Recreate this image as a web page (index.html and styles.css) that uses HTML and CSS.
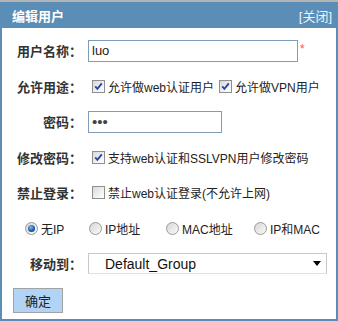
FILE: index.html
```html
<!DOCTYPE html>
<html lang="zh-CN">
<head>
    <meta charset="UTF-8">
    <title>编辑用户</title>
    <link rel="stylesheet" href="styles.css">
</head>
<body>
    <div class="dialog">
        <div class="dialog-head">
            <span class="title">编辑用户</span>
            <a class="close" href="#">[关闭]</a>
        </div>

        <form class="dialog-body">
            <div class="row">
                <label class="row-label">用户名称：</label>
                <div class="field">
                    <input class="text name" type="text" value="luo">
                    <span class="req">*</span>
                </div>
            </div>

            <div class="row">
                <label class="row-label">允许用途：</label>
                <div class="field checks">
                    <label class="check"><span class="cb on"><svg viewBox="0 0 11 11"><path d="M2.2 5.4 L4.4 7.8 L8.8 2.4"/></svg></span>允许做web认证用户</label>
                    <label class="check"><span class="cb on"><svg viewBox="0 0 11 11"><path d="M2.2 5.4 L4.4 7.8 L8.8 2.4"/></svg></span>允许做VPN用户</label>
                </div>
            </div>

            <div class="row">
                <label class="row-label">密码：</label>
                <div class="field">
                    <input class="text pass" type="password" value="abc">
                </div>
            </div>

            <div class="row">
                <label class="row-label">修改密码：</label>
                <div class="field checks">
                    <label class="check"><span class="cb on"><svg viewBox="0 0 11 11"><path d="M2.2 5.4 L4.4 7.8 L8.8 2.4"/></svg></span>支持web认证和SSLVPN用户修改密码</label>
                </div>
            </div>

            <div class="row">
                <label class="row-label">禁止登录：</label>
                <div class="field checks">
                    <label class="check"><span class="cb"></span>禁止web认证登录(不允许上网)</label>
                </div>
            </div>

            <div class="row radios">
                <label class="radio"><span class="rb on"></span>无IP</label>
                <label class="radio"><span class="rb"></span>IP地址</label>
                <label class="radio"><span class="rb"></span>MAC地址</label>
                <label class="radio"><span class="rb"></span>IP和MAC</label>
            </div>

            <div class="row">
                <label class="row-label">移动到：</label>
                <div class="field">
                    <div class="select-wrap">
                        <select class="group">
                            <option>Default_Group</option>
                        </select>
                    </div>
                </div>
            </div>

            <div class="actions">
                <button type="button" class="btn-ok">确定</button>
            </div>
        </form>
    </div>
</body>
</html>
```

FILE: styles.css
```css
* {
    margin: 0;
    padding: 0;
    box-sizing: border-box;
}

body {
    font-family: "Liberation Sans", Arial, "Noto Sans CJK SC", sans-serif;
    font-size: 12px;
    color: #222;
    background: #b4b4b4;
    padding-top: 2px;
}

.dialog {
    background: #fff;
    border: 2px solid #5b8eb7;
    border-top: none;
    height: 319px;
}

.dialog-head {
    display: flex;
    align-items: center;
    justify-content: space-between;
    height: 26px;
    background: #5b8eb7;
    color: #fff;
    margin: 0 -2px;
    padding-left: 12px;
    padding-right: 6px;
}

.title {
    font-size: 13px;
    font-weight: bold;
}

.close {
    font-size: 13px;
    color: #eef3f8;
    text-decoration: none;
}

.dialog-body {
    padding-top: 5px;
}

.row {
    display: grid;
    grid-template-columns: 80px 1fr;
    column-gap: 6px;
    align-items: center;
    height: 35.5px;
}

.row-label {
    text-align: right;
    font-size: 13px;
    font-weight: bold;
    color: #333;
    white-space: nowrap;
}

.field {
    display: flex;
    align-items: center;
}

.text {
    height: 22px;
    border: 1px solid #7f9db9;
    padding: 0 3px;
    font-family: "Liberation Sans", Arial, sans-serif;
    font-size: 13px;
    color: #222;
    outline: none;
}

.name {
    width: 210px;
}

.pass {
    width: 134px;
    font-size: 15px;
    letter-spacing: 0;
    color: #444;
}

.req {
    color: #ff5a1f;
    font-size: 12px;
    margin: -4px 0 0 2px;
}

.checks {
    gap: 5px;
    padding-left: 4px;
}

.check {
    display: flex;
    align-items: center;
    gap: 3px;
    white-space: nowrap;
}

.cb {
    display: inline-block;
    width: 13px;
    height: 13px;
    border: 1px solid #8e8f8f;
    background: linear-gradient(135deg, #d8d8d8, #f6f6f6 70%, #fff);
}

.cb svg {
    display: block;
    width: 11px;
    height: 11px;
}

.cb svg path {
    fill: none;
    stroke: #2a46a0;
    stroke-width: 1.9;
}

.radios {
    grid-template-columns: 64px 77px 88px auto;
    column-gap: 0;
    padding-left: 23px;
}

.radio {
    display: flex;
    align-items: center;
    gap: 3px;
    white-space: nowrap;
}

.rb {
    position: relative;
    width: 13px;
    height: 13px;
    border: 1px solid #9a9a9a;
    border-radius: 50%;
    background: linear-gradient(135deg, #d6d6d6, #fafafa);
}

.rb.on::after {
    content: "";
    position: absolute;
    left: 2px;
    top: 2px;
    width: 7px;
    height: 7px;
    border-radius: 50%;
    background: radial-gradient(circle at 40% 35%, #7fb9ec, #1a55a3 60%, #0b3477);
}

.select-wrap {
    position: relative;
    width: 239px;
}

.group {
    appearance: none;
    -webkit-appearance: none;
    width: 100%;
    height: 21px;
    border: 1px solid #c9c9c9;
    border-bottom-color: #e2e2e2;
    background: #fff;
    padding-left: 16px;
    font-family: "Liberation Sans", Arial, sans-serif;
    font-size: 14px;
    color: #111;
    outline: none;
}

.select-wrap::after {
    content: "";
    position: absolute;
    right: 6px;
    top: 8px;
    border-left: 4px solid transparent;
    border-right: 4px solid transparent;
    border-top: 5px solid #000;
}

.actions {
    padding: 6.5px 0 0 11px;
}

.btn-ok {
    width: 50px;
    height: 25px;
    background: #b0d3f6;
    border: 1px solid #a3a3a3;
    font-family: "Liberation Sans", Arial, "Noto Sans CJK SC", sans-serif;
    font-size: 13px;
    color: #222;
}
```
